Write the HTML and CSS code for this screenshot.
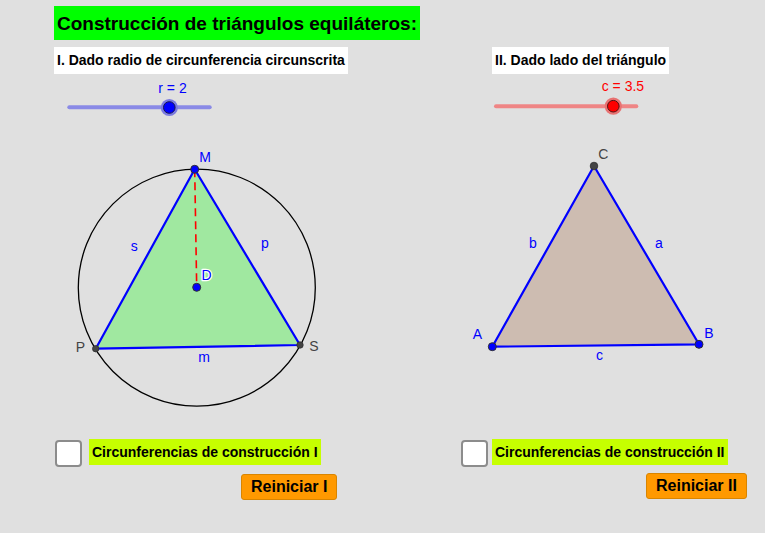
FILE: index.html
```html
<!DOCTYPE html>
<html lang="es">
<head>
<meta charset="utf-8">
<title>Construcción de triángulos equiláteros</title>
<link rel="stylesheet" href="styles.css">
</head>
<body>
<div class="app">
  <div class="title-row">
    <h1 class="title">Construcción de triángulos equiláteros:</h1>
  </div>
  <div class="labels-row">
    <div class="caption">I. Dado radio de circunferencia circunscrita</div>
    <div class="caption">II. Dado lado del triángulo</div>
  </div>
  <svg class="board" width="765" height="362" viewBox="0 74 765 362" xmlns="http://www.w3.org/2000/svg">
    <!-- slider r -->
    <text class="lbl" x="158.3" y="92.7" fill="#0000ff">r = 2</text>
    <line x1="69.3" y1="107.3" x2="209.7" y2="107.3" stroke="#8a8ae6" stroke-width="4" stroke-linecap="round"/>
    <circle cx="169.3" cy="107.5" r="8.6" fill="#7b7be0"/>
    <circle cx="169.3" cy="107.5" r="5.8" fill="#0000ff" stroke="#141450" stroke-width="1"/>

    <!-- slider c -->
    <text class="lbl" x="601.7" y="90.7" fill="#ff0000">c = 3.5</text>
    <line x1="496" y1="106.3" x2="636.3" y2="106.3" stroke="#ef8585" stroke-width="4" stroke-linecap="round"/>
    <circle cx="613.3" cy="106.2" r="8.6" fill="#e87272"/>
    <circle cx="613.3" cy="106.2" r="5.8" fill="#ff0000" stroke="#501414" stroke-width="1"/>

    <!-- construction I -->
    <circle cx="196.8" cy="287.7" r="118.5" fill="none" stroke="#000" stroke-width="1.3"/>
    <polygon points="95.7,348.7 194.7,169.3 300,345" fill="#a0e8a0" stroke="#0000ff" stroke-width="2.2" stroke-linejoin="round"/>
    <line x1="194.7" y1="169.3" x2="196.7" y2="287.3" stroke="#ff0000" stroke-width="1.6" stroke-dasharray="8,5"/>
    <circle cx="194.7" cy="169.3" r="4" fill="#0000ff" stroke="#303030" stroke-width="1"/>
    <circle cx="196.7" cy="287.3" r="4" fill="#0000ff" stroke="#303030" stroke-width="1"/>
    <circle cx="95.7" cy="348.7" r="3.2" fill="#444" stroke="#303030" stroke-width="0.8"/>
    <circle cx="300" cy="345" r="3.2" fill="#444" stroke="#303030" stroke-width="0.8"/>
    <text class="lbl" x="199.3" y="161.7" fill="#0000ff">M</text>
    <text class="lbl" x="130.7" y="250.8" fill="#0000ff">s</text>
    <text class="lbl" x="261" y="247.6" fill="#0000ff">p</text>
    <text class="lbl halo" x="201.5" y="280" fill="#0000ff">D</text>
    <text class="lbl" x="75.7" y="352" fill="#444">P</text>
    <text class="lbl" x="309.3" y="350.7" fill="#444">S</text>
    <text class="lbl" x="198.3" y="361.7" fill="#0000ff">m</text>

    <!-- construction II -->
    <polygon points="492.3,346.7 699,344.3 594,166" fill="#cdbcb1" stroke="#0000ff" stroke-width="2.2" stroke-linejoin="round"/>
    <circle cx="594" cy="166" r="3.8" fill="#444" stroke="#303030" stroke-width="0.8"/>
    <circle cx="492.3" cy="346.7" r="4" fill="#0000ff" stroke="#303030" stroke-width="1"/>
    <circle cx="699" cy="344.3" r="4" fill="#0000ff" stroke="#303030" stroke-width="1"/>
    <text class="lbl" x="598.3" y="159.3" fill="#444">C</text>
    <text class="lbl" x="529" y="247.7" fill="#0000ff">b</text>
    <text class="lbl" x="655" y="247.7" fill="#0000ff">a</text>
    <text class="lbl" x="472.7" y="339" fill="#0000ff">A</text>
    <text class="lbl" x="704.3" y="338.3" fill="#0000ff">B</text>
    <text class="lbl" x="596" y="360" fill="#0000ff">c</text>
  </svg>
  <div class="controls">
    <div class="col">
      <div class="check-row">
        <span class="checkbox"></span>
        <span class="check-label">Circunferencias de construcción I</span>
      </div>
      <button class="btn">Reiniciar I</button>
    </div>
    <div class="col col-right">
      <div class="check-row">
        <span class="checkbox"></span>
        <span class="check-label">Circunferencias de construcción II</span>
      </div>
      <button class="btn btn-right">Reiniciar II</button>
    </div>
  </div>
</div>
</body>
</html>
```
FILE: styles.css
```css
html, body {
  margin: 0;
  padding: 0;
  background: #ffffff;
}
body {
  font-family: "Liberation Sans", Arial, sans-serif;
}
.app {
  width: 765px;
  height: 533px;
  background: #e0e0e0;
  overflow: hidden;
}
.title-row {
  padding: 6px 0 0 54px;
  height: 34px;
}
.title {
  display: inline-block;
  margin: 0;
  height: 34px;
  line-height: 35px;
  padding: 0 3px;
  background: #00ff00;
  color: #000;
  font-size: 19px;
  font-weight: bold;
}
.labels-row {
  display: grid;
  grid-template-columns: 438px auto;
  padding: 7px 0 0 54px;
  align-items: start;
  justify-items: start;
}
.caption {
  height: 27px;
  line-height: 27px;
  padding: 0 3px;
  background: #ffffff;
  color: #000;
  font-size: 14px;
  font-weight: bold;
}
.board {
  display: block;
}
.lbl {
  font-family: "Liberation Sans", Arial, sans-serif;
  font-size: 14px;
}
.halo {
  stroke: #ffffff;
  stroke-width: 2.5px;
  paint-order: stroke;
  stroke-linejoin: round;
}
.controls {
  display: grid;
  grid-template-columns: 406px auto;
  padding: 3px 0 0 55px;
}
.col {
  display: flex;
  flex-direction: column;
  align-items: flex-start;
}
.check-row {
  display: flex;
  align-items: flex-start;
  gap: 7px;
}
.col-right .check-row {
  gap: 4px;
  margin-top: 0;
}
.checkbox {
  display: block;
  box-sizing: border-box;
  width: 27px;
  height: 27px;
  margin-top: 0.5px;
  background: #ffffff;
  border: 2px solid #8c8c8c;
  border-radius: 4px;
}
.col-right .checkbox {
  margin-top: 1px;
}
.check-label {
  display: block;
  height: 26px;
  line-height: 26px;
  padding: 0 3px;
  background: #c6ff00;
  color: #000;
  font-size: 14px;
  font-weight: bold;
}
.btn {
  margin: 7px 0 0 186px;
  height: 26px;
  padding: 0 9px;
  background: #ff9900;
  border: 1px solid #d98500;
  border-radius: 3px;
  color: #000;
  font-family: "Liberation Sans", Arial, sans-serif;
  font-size: 16px;
  font-weight: bold;
  line-height: 24px;
}
.btn-right {
  margin: 6px 0 0 185px;
}
```
